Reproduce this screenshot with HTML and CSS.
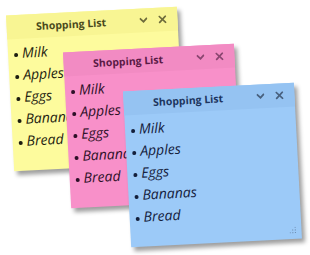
FILE: index.html
```html
<!DOCTYPE html>
<html lang="en">
<head>
<meta charset="utf-8">
<title>Sticky Notes</title>
<link rel="stylesheet" href="styles.css">
</head>
<body>
<div class="desk">
  <section class="note yellow">
    <header class="note-head">
      <h2 class="note-title">Shopping List</h2>
      <div class="note-tools">
        <svg class="ico" viewBox="0 0 8 8"><polyline points="1,2.3 4,5.3 7,2.3"/></svg>
        <svg class="ico" viewBox="0 0 8 8"><line x1="1" y1="1" x2="7" y2="7"/><line x1="7" y1="1" x2="1" y2="7"/></svg>
      </div>
    </header>
    <ul class="items">
      <li>Milk</li><li>Apples</li><li>Eggs</li><li>Bananas</li><li>Bread</li>
    </ul>
  </section>
  <section class="note pink">
    <header class="note-head">
      <h2 class="note-title">Shopping List</h2>
      <div class="note-tools">
        <svg class="ico" viewBox="0 0 8 8"><polyline points="1,2.3 4,5.3 7,2.3"/></svg>
        <svg class="ico" viewBox="0 0 8 8"><line x1="1" y1="1" x2="7" y2="7"/><line x1="7" y1="1" x2="1" y2="7"/></svg>
      </div>
    </header>
    <ul class="items">
      <li>Milk</li><li>Apples</li><li>Eggs</li><li>Bananas</li><li>Bread</li>
    </ul>
  </section>
  <section class="note blue">
    <header class="note-head">
      <h2 class="note-title">Shopping List</h2>
      <div class="note-tools">
        <svg class="ico" viewBox="0 0 8 8"><polyline points="1,2.3 4,5.3 7,2.3"/></svg>
        <svg class="ico" viewBox="0 0 8 8"><line x1="1" y1="1" x2="7" y2="7"/><line x1="7" y1="1" x2="1" y2="7"/></svg>
      </div>
    </header>
    <ul class="items">
      <li>Milk</li><li>Apples</li><li>Eggs</li><li>Bananas</li><li>Bread</li>
    </ul>
    <svg class="grip" viewBox="0 0 8 8">
      <rect x="6" y="0" width="1.2" height="1.2"/>
      <rect x="3" y="3" width="1.2" height="1.2"/><rect x="6" y="3" width="1.2" height="1.2"/>
      <rect x="0" y="6" width="1.2" height="1.2"/><rect x="3" y="6" width="1.2" height="1.2"/><rect x="6" y="6" width="1.2" height="1.2"/>
    </svg>
  </section>
</div>
</body>
</html>
```
FILE: styles.css
```css
* { box-sizing: border-box; }
html, body { margin: 0; padding: 0; background: #ffffff; }
.desk {
  position: relative;
  width: 310px;
  height: 255px;
  overflow: hidden;
}
.note {
  position: absolute;
  width: 171px;
  height: 156px;
  transform: rotate(-3deg);
  box-shadow: 3px 4px 4px rgba(0, 0, 0, 0.38);
  display: flex;
  flex-direction: column;
}
.yellow { left: 9.5px; top: 10.5px; background: #fdfb9d; color: #1d1d10; }
.pink { left: 66.5px; top: 47.5px; background: #f890c9; color: #2e1028; }
.blue { left: 126.5px; top: 86.5px; background: #9ccaf8; color: #14203c; }

.note-head {
  display: flex;
  align-items: center;
  height: 24px;
  flex: none;
}
.yellow .note-head { background: #f8f593; }
.pink .note-head { background: #f28bc3; }
.blue .note-head { background: #95c3f2; }

.note-title {
  flex: 1;
  margin: 0;
  padding-right: 4px;
  text-align: center;
  font-family: "Open Sans", "Noto Sans", sans-serif;
  font-weight: 700;
  font-size: 10.5px;
  line-height: 24px;
}
.yellow .note-title { color: #4a4a1c; }
.pink .note-title { color: #5a1a46; }
.blue .note-title { color: #1e3660; }

.note-tools {
  display: flex;
  align-items: center;
  gap: 11px;
  padding-right: 11px;
}
.ico {
  width: 8px;
  height: 8px;
  fill: none;
  stroke-width: 1.7;
  stroke-linecap: square;
}
.yellow .ico { stroke: #6e6c3c; }
.pink .ico { stroke: #8a4670; }
.blue .ico { stroke: #48607e; }

.items {
  list-style: none;
  margin: 0;
  padding: 3px 0 0 5.5px;
  font-family: "Open Sans", "Noto Sans", sans-serif;
  font-style: italic;
  font-size: 14px;
  line-height: 22px;
}
.items li {
  display: flex;
  align-items: center;
  gap: 4.5px;
  white-space: nowrap;
}
.items li::before {
  content: "";
  width: 4px;
  height: 4px;
  border-radius: 50%;
  background: currentColor;
  margin-top: 3px;
  flex: none;
}
.grip {
  position: absolute;
  right: 5px;
  bottom: 5px;
  width: 7px;
  height: 7px;
  fill: #6d8db0;
}
```
